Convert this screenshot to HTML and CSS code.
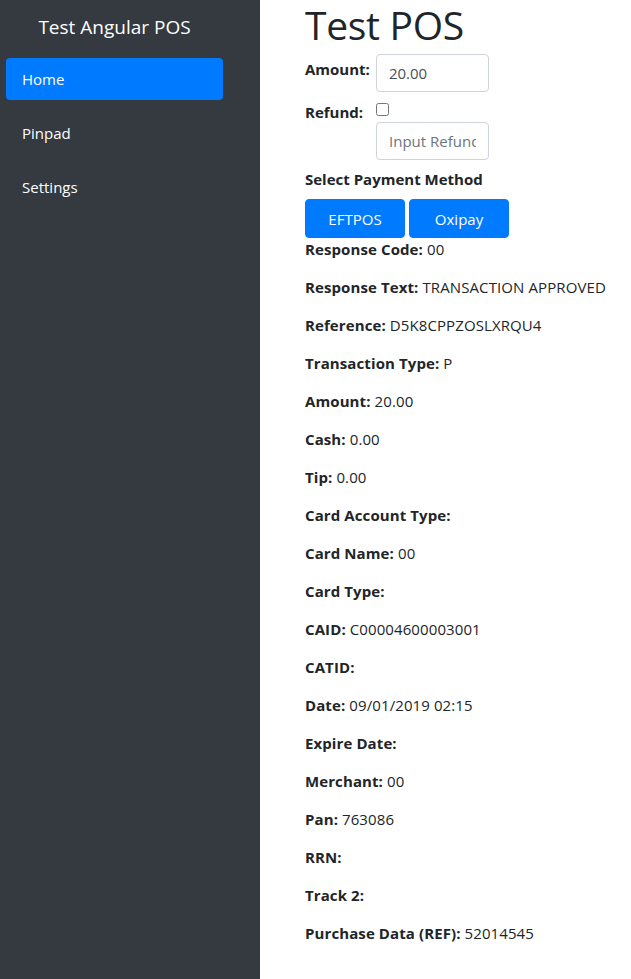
FILE: index.html
```html
<!DOCTYPE html>
<html>
<head>
<meta charset="utf-8">
<link rel="stylesheet" href="styles.css">
</head>
<body>
<div class="app">
  <aside class="sidebar">
    <div class="brand">Test Angular POS</div>
    <nav class="nav">
      <a class="nav-link active">Home</a>
      <a class="nav-link">Pinpad</a>
      <a class="nav-link">Settings</a>
    </nav>
  </aside>
  <main class="main">
    <h1 class="title">Test POS</h1>
    <div class="form-row">
      <label class="lbl">Amount:</label>
      <input class="form-control" type="text" value="20.00">
    </div>
    <div class="form-row refund">
      <label class="lbl">Refund:</label>
      <div class="refund-col">
        <input class="check" type="checkbox">
        <input class="form-control" type="text" placeholder="Input Refund Reference">
      </div>
    </div>
    <div class="section-title">Select Payment Method</div>
    <div class="btns">
      <button class="btn">EFTPOS</button>
      <button class="btn">Oxipay</button>
    </div>
    <div class="results">
      <p><b>Response Code:</b> 00</p>
      <p><b>Response Text:</b> TRANSACTION APPROVED</p>
      <p><b>Reference:</b> D5K8CPPZOSLXRQU4</p>
      <p><b>Transaction Type:</b> P</p>
      <p><b>Amount:</b> 20.00</p>
      <p><b>Cash:</b> 0.00</p>
      <p><b>Tip:</b> 0.00</p>
      <p><b>Card Account Type:</b> </p>
      <p><b>Card Name:</b> 00</p>
      <p><b>Card Type:</b> </p>
      <p><b>CAID:</b> C00004600003001</p>
      <p><b>CATID:</b> </p>
      <p><b>Date:</b> 09/01/2019 02:15</p>
      <p><b>Expire Date:</b> </p>
      <p><b>Merchant:</b> 00</p>
      <p><b>Pan:</b> 763086</p>
      <p><b>RRN:</b> </p>
      <p><b>Track 2:</b> </p>
      <p><b>Purchase Data (REF):</b> 52014545</p>
    </div>
  </main>
</div>
</body>
</html>
```

FILE: styles.css
```css
* { box-sizing: border-box; }
html, body { margin: 0; padding: 0; }
body {
  font-family: "Open Sans", "Noto Sans", sans-serif;
  font-size: 15px;
  line-height: 22px;
  color: #212529;
  background: #fff;
}
.app {
  display: flex;
  min-height: 979px;
}
.sidebar {
  width: 260px;
  flex: 0 0 260px;
  background: #343a40;
  padding: 0 37px 0 6px;
}
.brand {
  color: #fff;
  font-size: 19px;
  line-height: 28px;
  text-align: center;
  padding-top: 13px;
  height: 58px;
}
.nav {
  display: flex;
  flex-direction: column;
  gap: 12px;
}
.nav-link {
  display: block;
  height: 42px;
  line-height: 42px;
  padding: 0 16px;
  color: #fff;
  font-size: 15px;
  border-radius: 4px;
}
.nav-link.active { background: #007bff; }
.main {
  flex: 1;
  padding-left: 45px;
}
.title {
  font-size: 39px;
  font-weight: 500;
  line-height: 50px;
  margin: 0 0 4px;
  letter-spacing: -0.3px;
}
.form-row {
  display: flex;
  align-items: flex-start;
  gap: 6px;
}
.lbl {
  font-weight: 700;
  padding-top: 4px;
  line-height: 22px;
}
.form-control {
  width: 113px;
  height: 38px;
  padding: 6px 12px;
  font-family: inherit;
  font-size: 15px;
  color: #495057;
  border: 1px solid #ced4da;
  border-radius: 4px;
  background: #fff;
  outline: none;
}
.form-control::placeholder { color: #6c757d; }
.refund { margin-top: 9px; }
.refund .lbl { padding-top: 0; width: 65px; }
.refund-col {
  display: flex;
  flex-direction: column;
  align-items: flex-start;
}
.check {
  width: 13px;
  height: 13px;
  margin: 2px 0 6px 0;
}
.section-title {
  font-weight: 700;
  margin-top: 8px;
  height: 31px;
}
.btns {
  display: flex;
  gap: 4px;
}
.btn {
  width: 100px;
  height: 39px;
  background: #007bff;
  color: #fff;
  border: 1px solid #007bff;
  border-radius: 4px;
  font-family: inherit;
  font-size: 15px;
  padding: 0;
}
.results p {
  margin: 0 0 16px;
  line-height: 22px;
  letter-spacing: 0.1px;
}
.results b { font-weight: 700; }
```
